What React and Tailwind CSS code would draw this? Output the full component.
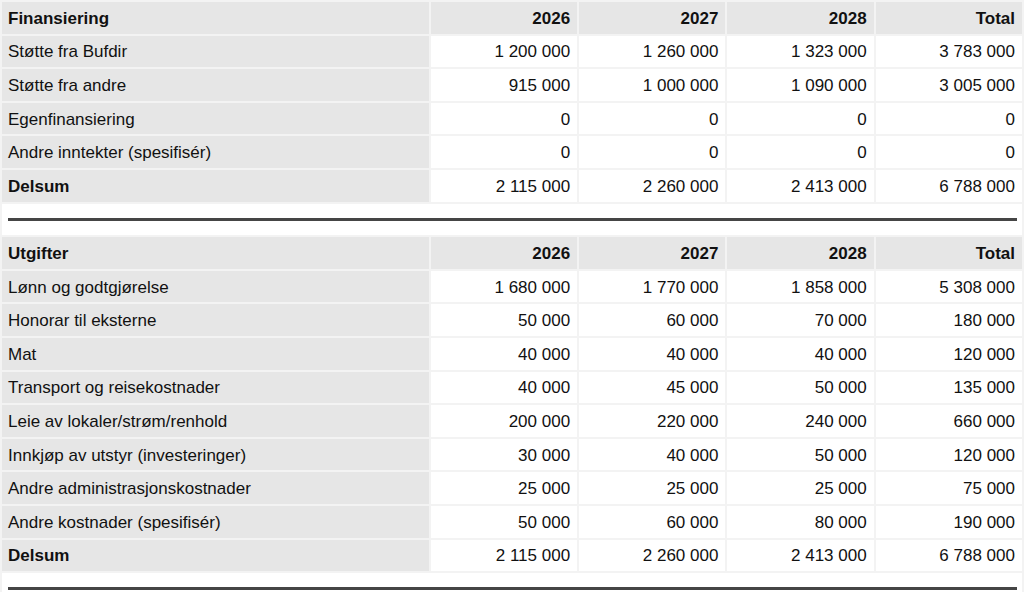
import React from "react";

const fin = [
  ["Støtte fra Bufdir", "1 200 000", "1 260 000", "1 323 000", "3 783 000"],
  ["Støtte fra andre", "915 000", "1 000 000", "1 090 000", "3 005 000"],
  ["Egenfinansiering", "0", "0", "0", "0"],
  ["Andre inntekter (spesifisér)", "0", "0", "0", "0"],
];
const finSum = ["Delsum", "2 115 000", "2 260 000", "2 413 000", "6 788 000"];

const utg = [
  ["Lønn og godtgjørelse", "1 680 000", "1 770 000", "1 858 000", "5 308 000"],
  ["Honorar til eksterne", "50 000", "60 000", "70 000", "180 000"],
  ["Mat", "40 000", "40 000", "40 000", "120 000"],
  ["Transport og reisekostnader", "40 000", "45 000", "50 000", "135 000"],
  ["Leie av lokaler/strøm/renhold", "200 000", "220 000", "240 000", "660 000"],
  ["Innkjøp av utstyr (investeringer)", "30 000", "40 000", "50 000", "120 000"],
  ["Andre administrasjonskostnader", "25 000", "25 000", "25 000", "75 000"],
  ["Andre kostnader (spesifisér)", "50 000", "60 000", "80 000", "190 000"],
];
const utgSum = ["Delsum", "2 115 000", "2 260 000", "2 413 000", "6 788 000"];

function Header({ title }) {
  return (
    <tr>
      <td className="h-[31.6px] bg-[#e6e6e6] pl-[6px] pr-[7px] pt-[2px] pb-0 font-bold text-left">{title}</td>
      {["2026", "2027", "2028", "Total"].map((y) => (
        <td key={y} className="h-[31.6px] bg-[#e6e6e6] pl-[6px] pr-[7px] pt-[2px] pb-0 font-bold text-right">{y}</td>
      ))}
    </tr>
  );
}

function Row({ r, bold }) {
  return (
    <tr>
      <td className={"h-[31.6px] bg-[#e6e6e6] pl-[6px] pr-[7px] pt-[2px] pb-0 text-left " + (bold ? "font-bold" : "")}>{r[0]}</td>
      {r.slice(1).map((v, i) => (
        <td key={i} className="h-[31.6px] bg-white pl-[6px] pr-[7px] pt-[2px] pb-0 text-right">{v}</td>
      ))}
    </tr>
  );
}

function Sep() {
  return (
    <tr>
      <td colSpan={5} className="h-[31.6px] bg-white pl-[6px] pr-[5px] py-0">
        <div className="h-[3px] bg-[#454545]" />
      </td>
    </tr>
  );
}

export default function App() {
  return (
    <div
      className="min-h-screen bg-[#f3f3f3] text-[#111] text-[17px] leading-[20px]"
      style={{ fontFamily: '"Liberation Sans", Arial, sans-serif' }}
    >
      <table className="w-full table-fixed border-separate border-spacing-[2px]">
        <colgroup>
          <col className="w-[426px]" />
          <col className="w-[146px]" />
          <col className="w-[146px]" />
          <col className="w-[146px]" />
          <col className="w-[146px]" />
        </colgroup>
        <tbody>
          <Header title="Finansiering" />
          {fin.map((r) => (
            <Row key={r[0]} r={r} />
          ))}
          <Row r={finSum} bold />
          <Sep />
          <Header title="Utgifter" />
          {utg.map((r) => (
            <Row key={r[0]} r={r} />
          ))}
          <Row r={utgSum} bold />
          <Sep />
        </tbody>
      </table>
    </div>
  );
}
